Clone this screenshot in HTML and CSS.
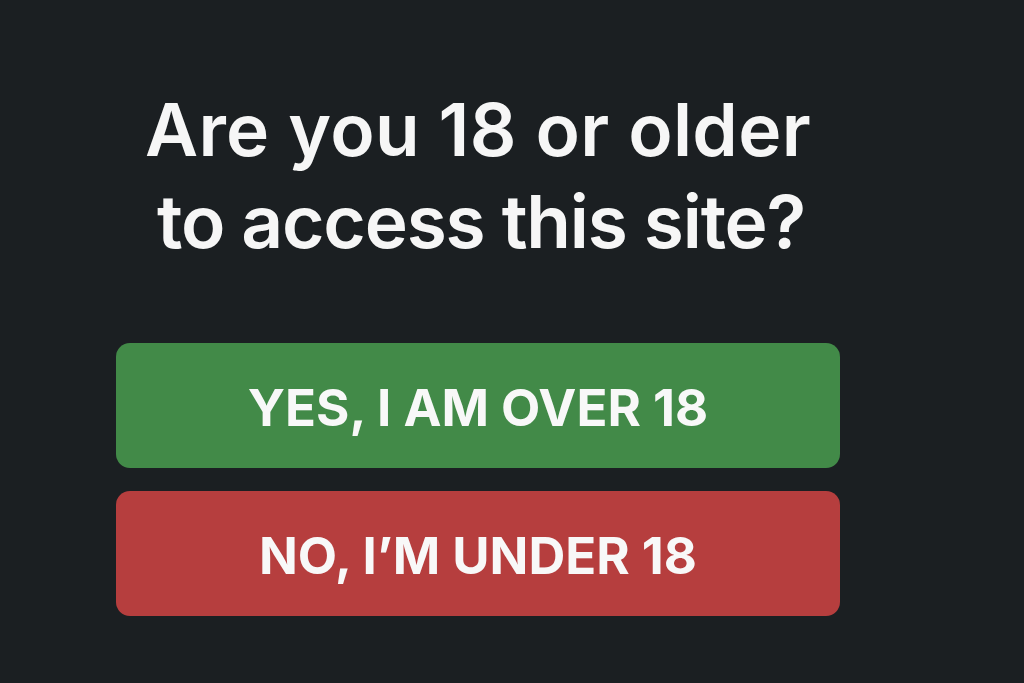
FILE: index.html
```html
<!DOCTYPE html>
<html>
<head>
    <title>Age Check</title>
    <link rel="stylesheet" href="styles.css">
</head>
<body>
    <div class="age-gate">
        <h1>
            <span class="line line-1">Are you 18 or older</span>
            <span class="line line-2">to access this site?</span>
        </h1>

        <div class="buttons">
            <button class="btn btn-yes">YES, I AM OVER 18</button>
            <button class="btn btn-no">NO, I’M UNDER 18</button>
        </div>
    </div>
</body>
</html>
```
FILE: styles.css
```css
body {
    font-family: Inter, "Noto Sans", sans-serif;
    background-color: #1b1f22;
    margin: 0;
    padding: 0;
    height: 683px;
    overflow: hidden;
}

.age-gate {
    width: 724px;
    margin-left: 116px;
    padding-top: 84px;
}

h1 {
    margin: 0;
    text-align: center;
    color: #f6f6f6;
    font-size: 73px;
    font-weight: 600;
    line-height: 92px;
}

h1 .line {
    display: block;
}

h1 .line-1 {
    letter-spacing: 0.3px;
}

h1 .line-2 {
    letter-spacing: -1.2px;
    padding-left: 6px;
}

.buttons {
    display: flex;
    flex-direction: column;
    gap: 23px;
    margin-top: 75px;
}

.btn {
    display: block;
    width: 100%;
    height: 125px;
    padding: 3px 0 0 0;
    border: none;
    border-radius: 14px;
    color: #f8f8f8;
    font-family: Inter, "Noto Sans", sans-serif;
    font-size: 51px;
    font-weight: 700;
    cursor: pointer;
}

.btn-yes {
    background-color: #428a48;
}

.btn-no {
    background-color: #b63e3e;
}
```
